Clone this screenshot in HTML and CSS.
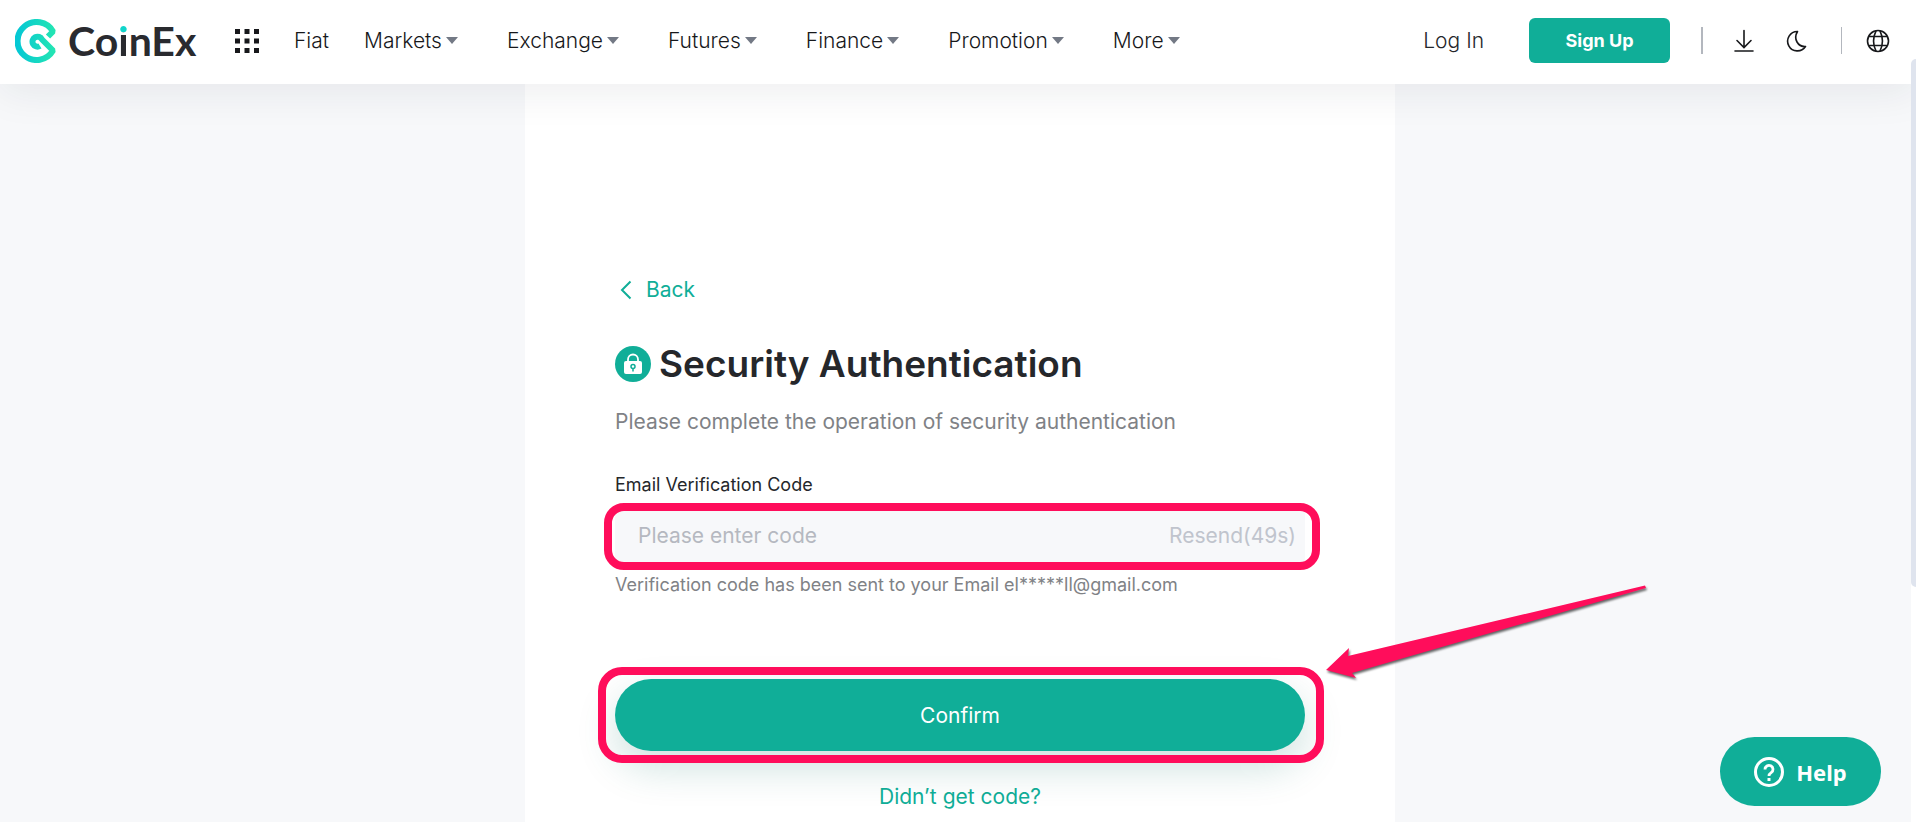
FILE: index.html
```
<!DOCTYPE html>
<html lang="en">
<head>
    <meta charset="UTF-8">
    <meta name="viewport" content="width=device-width, initial-scale=1.0">
    <title>Security Authentication | CoinEx</title>
    <link rel="stylesheet" href="styles.css">
</head>
<body>
    <header class="header">
        <a href="#" class="logo">
            <svg class="logo-mark" viewBox="0 0 42 44" fill="none">
                <defs>
                    <linearGradient id="mark" x1="0" y1="0" x2="1" y2="0">
                        <stop offset="0" stop-color="#05c8d4"/>
                        <stop offset="1" stop-color="#22e4b4"/>
                    </linearGradient>
                </defs>
                <path d="M33 17.500L38 12.500A19 19 0 1 0 38 31.500L27 20.500A5 5 0 1 0 25 27" stroke="url(#mark)" stroke-width="6" stroke-linejoin="bevel"/>
            </svg>
            <span class="logo-text">Co<span class="logo-i">i</span>nEx</span>
        </a>
        <button class="apps" aria-label="Apps">
            <svg width="24" height="24" viewBox="0 0 24 24" fill="#17181b">
                <path d="M0 0h5v5H0zM9.500 0h5v5h-5zM19 0h5v5h-5zM0 9.500h5v5H0zM9.500 9.500h5v5h-5zM19 9.500h5v5h-5zM0 19h5v5H0zM9.500 19h5v5h-5zM19 19h5v5h-5z"/>
            </svg>
        </button>
        <nav class="nav">
            <a href="#" class="plain">Fiat</a>
            <a href="#">Markets</a>
            <a href="#">Exchange</a>
            <a href="#">Futures</a>
            <a href="#">Finance</a>
            <a href="#">Promotion</a>
            <a href="#">More</a>
        </nav>
        <div class="account">
            <a href="#" class="login">Log In</a>
            <button class="signup">Sign Up</button>
            <span class="divider"></span>
            <button class="icon-btn" aria-label="Download">
                <svg width="24" height="24" viewBox="0 0 24 24" fill="none" stroke="#17181b" stroke-width="1.600" stroke-linecap="round">
                    <path d="M12 1.500V18M5 11.500l7 7 7-7M3 22h18"/>
                </svg>
            </button>
            <button class="icon-btn" aria-label="Dark mode">
                <svg width="24" height="24" viewBox="0 0 24 24" fill="none" stroke="#17181b" stroke-width="1.600" stroke-linejoin="round">
                    <path d="M12.500 2.500A9.700 9.700 0 1 0 20.500 17.500C13 18 8 10 12.500 2.500z"/>
                </svg>
            </button>
            <span class="divider"></span>
            <button class="icon-btn" aria-label="Language">
                <svg width="24" height="24" viewBox="0 0 24 24" fill="none" stroke="#17181b" stroke-width="1.600">
                    <circle cx="12" cy="12" r="10.500"/>
                    <path d="M3 7.500h18M3 16.500h18M10 1.800C7 8 7 16 10 22.200M14 1.800C17 8 17 16 14 22.200"/>
                </svg>
            </button>
        </div>
    </header>

    <main class="page">
        <form class="card">
            <a href="#" class="back">
                <svg width="12" height="20" viewBox="0 0 12 20" fill="none" stroke="#10ae98" stroke-width="2">
                    <path d="M10.500 1.500L2 10l8.500 8.500"/>
                </svg>
                Back
            </a>
            <h1>
                <svg width="36" height="36" viewBox="0 0 36 36" fill="none">
                    <circle cx="18" cy="18" r="18" fill="#10ae98"/>
                    <rect x="9" y="15" width="18" height="13" rx="2" fill="#fff"/>
                    <path d="M13 16v-2.500a5 5 0 0 1 10 0V16" stroke="#fff" stroke-width="1.800"/>
                    <circle cx="18" cy="20.500" r="2" stroke="#10ae98" stroke-width="1.500"/>
                    <path d="M18 22.500v3" stroke="#10ae98" stroke-width="1.500"/>
                </svg>
                Security Authentication
            </h1>
            <p class="intro">Please complete the operation of security authentication</p>

            <label for="code">Email Verification Code</label>
            <div class="field marked">
                <input type="text" id="code" placeholder="Please enter code">
                <button type="button" class="resend" disabled>Resend(49s)</button>
            </div>
            <p class="hint">Verification code has been sent to your Email el*****ll@gmail.com</p>

            <div class="submit marked">
                <button type="submit" class="confirm">Confirm</button>
                <svg class="arrow" width="340" height="104" viewBox="0 0 340 104">
                    <path d="M6 89L29 67 28 75 325 4.500 326 7 32 92 36 97z" fill="#ff0d5b"/>
                </svg>
            </div>
            <a href="#" class="no-code">Didn’t get code?</a>
        </form>
    </main>

    <button class="help">
        <svg width="30" height="30" viewBox="0 0 30 30" fill="none" stroke="#fff" stroke-width="3">
            <circle cx="15" cy="15" r="13.500"/>
            <path d="M11 12.500a4 4 0 1 1 6.200 3.200c-1.500 1-2.200 1.600-2.200 3.300" stroke-width="2.800"/>
            <path d="M13.500 21h3v3h-3z" fill="#fff" stroke="none"/>
        </svg>
        Help
    </button>
    <div class="scrollbar"></div>
</body>
</html>
```
FILE: styles.css
```
* {
    box-sizing: border-box;
}
body {
    margin: 0;
    height: 100vh;
    overflow: hidden;
    display: flex;
    flex-direction: column;
    font-family: Inter, "Liberation Sans", sans-serif;
    font-size: 21px;
    color: #25272b;
    background-color: #f7f8fa;
}
a {
    color: inherit;
    text-decoration: none;
}
button {
    font: inherit;
    padding: 0;
    border: none;
    background: none;
    cursor: pointer;
}
svg {
    display: block;
    flex: none;
}

/* Header */
.header {
    position: relative;
    z-index: 1;
    flex: none;
    display: flex;
    align-items: center;
    height: 84px;
    padding: 0 26px 3px 15px;
    background-color: #fff;
    box-shadow: 0 8px 40px rgba(30, 40, 50, 0.08);
}
.logo {
    display: flex;
    align-items: center;
    gap: 11px;
    width: 180px;
}
.logo-mark {
    width: 42px;
    height: 44px;
}
.logo-text {
    font-family: Lato, sans-serif;
    font-size: 41px;
    line-height: 44px;
    font-weight: 700;
    color: #292a2f;
}
.logo-i {
    color: transparent;
    background: linear-gradient(#10d5cb 16px, #292a2f 16px);
    -webkit-background-clip: text;
    background-clip: text;
}
.apps {
    margin: 0 35px 0 40px;
}
.nav {
    display: flex;
    gap: 49px;
    font-weight: 300;
    color: #17181b;
}
.nav a {
    display: flex;
    align-items: center;
    gap: 4px;
}
.nav a::after {
    content: "";
    border: 6px solid transparent;
    border-top: 7px solid #737985;
    border-bottom: none;
}
.nav .plain {
    margin-right: -14px;
}
.nav .plain::after {
    display: none;
}
.account {
    display: flex;
    align-items: center;
    margin-left: auto;
}
.login {
    font-weight: 300;
    margin-right: 45px;
}
.signup {
    width: 141px;
    height: 45px;
    margin-right: 31px;
    border-radius: 6px;
    font-size: 18px;
    font-weight: 700;
    color: #fff;
    background-color: #10ae98;
}
.divider {
    width: 2px;
    height: 27px;
    background-color: #b3b7be;
}
.icon-btn {
    margin-left: 29px;
}
.icon-btn + .divider {
    width: 1px;
    margin-left: 32px;
}
.icon-btn:last-child {
    margin-left: 24px;
}

/* Form */
.page {
    flex: 1;
    display: flex;
    justify-content: center;
    padding-left: 4px;
}
.card {
    display: flex;
    flex-direction: column;
    width: 870px;
    padding: 191px 90px 0;
    background-color: #fff;
}
.back {
    display: flex;
    align-items: center;
    gap: 14px;
    padding-left: 5px;
    line-height: 30px;
    color: #10ae98;
}
h1 {
    display: flex;
    align-items: center;
    gap: 8px;
    margin: 35px 0 0;
    font-size: 37px;
    line-height: 48px;
    font-weight: 600;
}
.intro {
    margin: 19px 0 0;
    line-height: 30px;
    color: #7f8286;
}
label {
    margin-top: 36px;
    font-size: 18px;
    line-height: 24px;
}
.field {
    display: flex;
    align-items: center;
    height: 60px;
    margin-top: 8px;
    padding: 0 9px 0 23px;
    background-color: #f7f8fa;
}
.field input {
    flex: 1;
    padding: 0;
    border: none;
    outline: none;
    font: inherit;
    background: none;
}
.field input::placeholder {
    color: #b5b8c0;
}
.resend {
    color: #c0c4cd;
}
.hint {
    margin: 8px 0 0;
    font-size: 18px;
    line-height: 24px;
    color: #7f8286;
}
.confirm {
    width: 100%;
    height: 72px;
    border-radius: 36px;
    color: #fff;
    background-color: #10ae98;
    box-shadow: 0 16px 40px rgba(10, 110, 95, 0.2);
}
.submit {
    margin-top: 82px;
}
.no-code {
    align-self: center;
    margin-top: 31px;
    line-height: 30px;
    color: #10ae98;
}

/* Highlight rings and arrow */
.marked {
    position: relative;
}
.marked::after {
    content: "";
    position: absolute;
    inset: -2px -15px -5px -11px;
    border: 8px solid #ff0d5b;
    border-radius: 20px;
    pointer-events: none;
}
.submit::after {
    inset: -12px -19px -12px -17px;
    border-radius: 24px;
}
.arrow {
    position: absolute;
    left: calc(100% + 15px);
    bottom: 66px;
    filter: drop-shadow(1px 2px 1px rgba(0, 0, 0, 0.6));
}

.help {
    position: absolute;
    z-index: 2;
    right: 35px;
    bottom: 16px;
    display: flex;
    align-items: center;
    justify-content: center;
    gap: 12px;
    width: 161px;
    height: 69px;
    border-radius: 35px;
    font-family: "Noto Sans", sans-serif;
    font-size: 22px;
    font-weight: 700;
    color: #fff;
    background-color: #10ae98;
}
.scrollbar {
    position: absolute;
    z-index: 2;
    top: 0;
    right: 0;
    bottom: 0;
    width: 5px;
    background-color: #fff;
}
.scrollbar::before {
    content: "";
    display: block;
    height: 528px;
    margin-top: 59px;
    border-radius: 5px 0 0 5px;
    background-color: #dfe4ee;
}
```
